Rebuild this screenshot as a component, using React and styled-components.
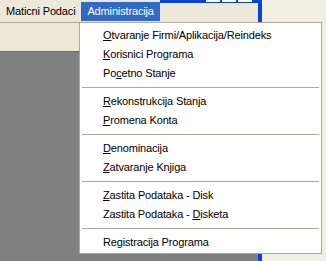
import React from 'react';
import styled, { createGlobalStyle } from 'styled-components';

const Global = createGlobalStyle`
  html, body { margin: 0; padding: 0; }
  body {
    width: 326px;
    height: 261px;
    overflow: hidden;
    background: #F1EFE2;
    font-family: "Liberation Sans", Arial, sans-serif;
    font-size: 11px;
    letter-spacing: -0.15px;
    color: #000;
  }
`;

const Screen = styled.div`
  position: relative;
  width: 326px;
  height: 261px;
  overflow: hidden;
  display: flex;
  background: #F1EFE2;
`;

const AppWindow = styled.div`
  width: 258px;
  flex: none;
  border-right: 4px solid #0843DA;
  display: flex;
  flex-direction: column;
  background: #808080;
`;

const MenuBar = styled.div`
  height: 22px;
  display: flex;
  align-items: stretch;
  background: #ECE9D8;
`;

const MenuTitle = styled.div`
  margin-top: 2px;
  padding: 0 6px;
  height: 19px;
  line-height: 18px;
  box-sizing: border-box;
  white-space: nowrap;
  background: ${p => (p.$active ? '#316AC5' : 'transparent')};
  color: ${p => (p.$active ? '#fff' : '#000')};
`;

const CaptionRemnant = styled.div`
  flex: 1;
  display: flex;
  justify-content: flex-end;
  gap: 2px;
  padding-right: 6px;
  border-top: 3px solid #0843DA;
`;

const CaptionButton = styled.div`
  width: 14px;
  height: 2px;
  margin-top: -3px;
  background: #fff;
`;

const Toolbar = styled.div`
  height: 28px;
  background: #ECE9D8;
  border-top: 1px solid #ACA899;
`;

const Workspace = styled.div`
  flex: 1;
  background: #808080;
  border-top: 1px solid #6f6f6f;
`;

const Dropdown = styled.div`
  position: absolute;
  left: 79px;
  top: 22px;
  width: 243px;
  box-sizing: border-box;
  background: #fff;
  border: 1px solid #ACA899;
  padding: 3px 1px 1px;
  display: flex;
  flex-direction: column;
`;

const Item = styled.div`
  height: 19px;
  line-height: 19px;
  padding-left: 22px;
  white-space: pre;
`;

const Separator = styled.div`
  height: 9px;
  display: flex;
  align-items: center;
  padding: 0 1px;
  &::after {
    content: '';
    flex: 1;
    height: 1px;
    background: #ACA899;
  }
`;

const Key = styled.span`
  text-decoration: underline;
`;

const menu = [
  ['', 'O', 'tvaranje Firmi/Aplikacija/Reindeks'],
  ['', 'K', 'orisnici Programa'],
  ['Po', 'c', 'etno Stanje'],
  null,
  ['', 'R', 'ekonstrukcija Stanja'],
  ['', 'P', 'romena Konta'],
  null,
  ['', 'D', 'enominacija'],
  ['', 'Z', 'atvaranje Knjiga'],
  null,
  ['', 'Z', 'astita Podataka - Disk'],
  ['Zastita Podataka - ', 'D', 'isketa'],
  null,
  ['Registracija Programa', '', ''],
];

export default function App() {
  return (
    <>
      <Global />
      <Screen>
        <AppWindow>
          <MenuBar>
            <MenuTitle>Maticni Podaci</MenuTitle>
            <MenuTitle $active>Administracija</MenuTitle>
            <CaptionRemnant>
              <CaptionButton />
              <CaptionButton />
              <CaptionButton />
            </CaptionRemnant>
          </MenuBar>
          <Toolbar />
          <Workspace />
        </AppWindow>
        <Dropdown>
          {menu.map((m, i) =>
            m ? (
              <Item key={i}>
                {m[0]}
                {m[1] && <Key>{m[1]}</Key>}
                {m[2]}
              </Item>
            ) : (
              <Separator key={i} />
            )
          )}
        </Dropdown>
      </Screen>
    </>
  );
}
